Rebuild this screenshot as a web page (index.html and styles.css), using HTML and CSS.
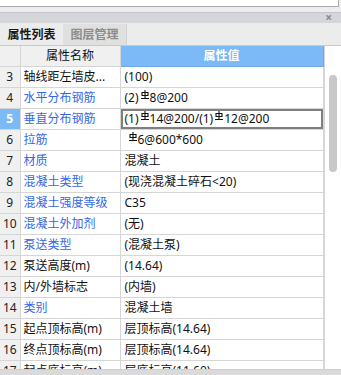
FILE: index.html
```html
<!DOCTYPE html>
<html lang="zh">
<head>
  <meta charset="UTF-8">
  <title>属性列表</title>
  <link rel="stylesheet" href="styles.css">
</head>
<body>
  <div class="top-pane"></div>
  <div class="spacer"></div>
  <div class="title-bar"><span class="close">&times;</span></div>
  <div class="tabs">
    <div class="tab active">属性列表</div>
    <div class="tab">图层管理</div>
  </div>

  <div class="grid-wrap">
    <table class="props">
      <colgroup>
        <col class="c-num">
        <col class="c-name">
        <col class="c-val">
      </colgroup>
      <thead>
        <tr>
          <th class="num"></th>
          <th class="name-head">属性名称</th>
          <th class="val-head">属性值</th>
        </tr>
      </thead>
      <tbody>
        <tr><td class="num">3</td><td>轴线距左墙皮...</td><td>(100)</td></tr>
        <tr><td class="num">4</td><td class="link">水平分布钢筋</td><td>(2)<svg class="bar" viewBox="0 0 8 9"><path d="M4 0V9M1 2.5H7V5.5H1ZM0 8.5H8"/></svg>8@200</td></tr>
        <tr class="selected"><td class="num">5</td><td class="link">垂直分布钢筋</td><td class="editing">(1)<svg class="bar" viewBox="0 0 8 9"><path d="M4 0V9M1 2.5H7V5.5H1ZM0 8.5H8"/></svg>14@200/(1)<svg class="bar" viewBox="0 0 8 9"><path d="M4 0V9M1 2.5H7V5.5H1ZM0 8.5H8"/></svg>12@200</td></tr>
        <tr><td class="num">6</td><td class="link">拉筋</td><td class="indent"><svg class="bar" viewBox="0 0 8 9"><path d="M4 0V9M1 2.5H7V5.5H1ZM0 8.5H8"/></svg>6@600*600</td></tr>
        <tr><td class="num">7</td><td class="link">材质</td><td>混凝土</td></tr>
        <tr><td class="num">8</td><td class="link">混凝土类型</td><td>(现浇混凝土碎石&lt;20)</td></tr>
        <tr><td class="num">9</td><td class="link">混凝土强度等级</td><td>C35</td></tr>
        <tr><td class="num">10</td><td class="link">混凝土外加剂</td><td>(无)</td></tr>
        <tr><td class="num">11</td><td class="link">泵送类型</td><td>(混凝土泵)</td></tr>
        <tr><td class="num">12</td><td>泵送高度(m)</td><td>(14.64)</td></tr>
        <tr><td class="num">13</td><td>内/外墙标志</td><td>(内墙)</td></tr>
        <tr><td class="num">14</td><td class="link">类别</td><td>混凝土墙</td></tr>
        <tr><td class="num">15</td><td>起点顶标高(m)</td><td>层顶标高(14.64)</td></tr>
        <tr><td class="num">16</td><td>终点顶标高(m)</td><td>层顶标高(14.64)</td></tr>
        <tr><td class="num">17</td><td>起点底标高(m)</td><td>层底标高(11.60)</td></tr>
      </tbody>
    </table>
    <div class="scrollbar"><div class="thumb"></div></div>
  </div>
  <div class="bottom-bar"></div>
</body>
</html>
```

FILE: styles.css
```css
body {
  margin: 0;
  width: 341px;
  height: 375px;
  overflow: hidden;
  background: #ededed;
  font-family: "Noto Sans", "Noto Sans CJK SC", sans-serif;
  font-size: 12px;
  color: #111;
}
.top-pane {
  height: 6px;
  width: 338px;
  background: #fff;
  border-right: 1px solid #ababab;
  border-bottom: 1px solid #ababab;
}
.spacer {
  height: 5px;
}
.title-bar {
  height: 10px;
  background: #d5d6da;
  border-top: 1px solid #c4c5c9;
  display: flex;
  justify-content: flex-end;
  align-items: center;
}
.close {
  color: #8a8a8a;
  font-weight: bold;
  font-size: 12px;
  line-height: 10px;
  margin-right: 9px;
}
.tabs {
  height: 22px;
  display: flex;
  align-items: flex-end;
  background: #ececec;
  border-bottom: 1px solid #c9c9c9;
}
.tab {
  width: 63px;
  height: 21px;
  line-height: 21px;
  text-align: center;
  font-weight: bold;
  font-size: 12px;
  color: #8c8c8c;
  background: #e0e0e0;
  border-right: 1px solid #d0d0d0;
}
.tab.active {
  color: #1a1a1a;
  background: #ececec;
  border-right: none;
}

.grid-wrap {
  display: flex;
  height: 323px;
  overflow: hidden;
  background: #fff;
}
.props {
  width: 323px;
  border-collapse: collapse;
  table-layout: fixed;
  flex: none;
}
.c-num { width: 20px; }
.c-name { width: 100px; }
.c-val { width: 203px; }
.props th,
.props td {
  height: 20px;
  padding: 0 0 0 3px;
  border: 1px solid #d6d6d6;
  white-space: nowrap;
  overflow: hidden;
  line-height: 20px;
}
.props thead th {
  background: #f0f0f0;
  font-weight: normal;
  border-top: none;
  padding: 0;
  text-align: center;
}
.props thead th.val-head {
  background: #7cb9f7;
  color: #fff;
  font-weight: bold;
  border-color: #6fa9e6;
}
.props td.num {
  background: #f0f0f0;
  text-align: center;
  padding: 0;
  color: #222;
}
.props .num { border-left: none; }
.props td:last-child { padding-left: 4px; }
.props td.indent { padding-left: 6px; }
.link { color: #3468e4; }
.selected td.num {
  background: #7cb9f7;
  color: #fff;
  font-weight: bold;
}
.props td.editing {
  box-shadow: inset 0 0 0 2px #7f7f7f;
}
.bar {
  width: 8px;
  height: 9px;
  vertical-align: 3px;
  margin: 0 1px 0 2px;
  fill: none;
  stroke: #111;
  stroke-width: 1.1;
}
.scrollbar {
  flex: 1;
  background: #fff;
  border-left: 1px solid #d6d6d6;
  position: relative;
}
.thumb {
  position: absolute;
  left: 4px;
  top: 29px;
  width: 8px;
  height: 97px;
  border-radius: 4px;
  background: #c8c8c8;
}
.bottom-bar {
  height: 5px;
  background: #dadada;
  border-top: 1px solid #cfcfcf;
}
```
